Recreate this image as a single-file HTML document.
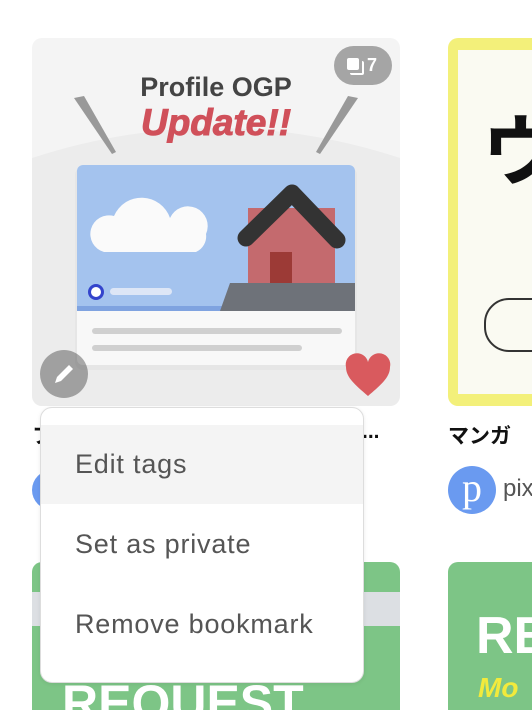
<!DOCTYPE html>
<html><head><meta charset="utf-8"><style>
html,body{margin:0;width:532px;height:710px;overflow:hidden}
body{background:#fff;font-family:"Liberation Sans","Noto Sans CJK JP",sans-serif;position:relative}
.abs{position:absolute}
</style></head><body>
<!-- card 1 -->
<div class="abs" style="left:32px;top:38px;width:368px;height:368px;border-radius:10px;overflow:hidden;background:#f4f4f4">
<svg width="368" height="368" style="position:absolute;left:0;top:0">
<path d="M0 120 Q184 60 368 120 L368 368 L0 368Z" fill="#ececec"/>
<polygon points="42,60 52,58 84,114 80,116" fill="#999"/>
<polygon points="316,58 326,60 288,116 284,114" fill="#999"/>
<text x="184" y="58" text-anchor="middle" font-family="Liberation Sans" font-weight="bold" font-size="27" fill="#444">Profile OGP</text>
<text x="184" y="97" text-anchor="middle" font-family="Liberation Sans" font-weight="bold" font-style="italic" font-size="37" fill="#d0505a" stroke="#d0505a" stroke-width="1">Update!!</text>
<rect x="43" y="129" width="282" height="203" rx="8" fill="#e2e2e2" opacity=".6"/>
<rect x="45" y="127" width="278" height="200" rx="6" fill="#f8f8f8"/>
<path d="M51 127 h266 a6 6 0 0 1 6 6 v140 h-278 v-140 a6 6 0 0 1 6-6z" fill="#a4c3ee"/>
<rect x="45" y="268" width="278" height="5" fill="#7fa3e0"/>
<path d="M72 214 a18 18 0 0 1 10-36 a30 30 0 0 1 56 2 a18 18 0 0 1 36 16 a17 17 0 0 1 -10 18z" fill="#fafafa"/>
<polygon points="188,273 198,245 323,245 323,273" fill="#6e7279"/>
<rect x="216" y="170" width="87" height="75" fill="#c46a6e"/>
<rect x="238" y="214" width="22" height="31" fill="#9c3a36"/>
<path d="M214 200 L260 155 L305 202" stroke="#333" stroke-width="17" fill="none" stroke-linecap="round" stroke-linejoin="round"/>
<circle cx="64" cy="254" r="8" fill="#3344cc"/><circle cx="64" cy="254" r="5" fill="#fff"/>
<rect x="78" y="250" width="62" height="7" rx="3.5" fill="#dde6f6"/>
<rect x="60" y="290" width="250" height="6" rx="3" fill="#d0d0d0"/>
<rect x="60" y="307" width="210" height="6" rx="3" fill="#d0d0d0"/>
</svg>
<div class="abs" style="left:302px;top:8px;width:58px;height:39px;border-radius:20px;background:rgba(0,0,0,.32);color:#fff;font-weight:bold;font-size:18px;line-height:39px">
<span class="abs" style="left:13px;top:12px;width:12px;height:12px;background:#fff;border-radius:2px"></span>
<span class="abs" style="left:16px;top:15px;width:12px;height:12px;border-right:2px solid #fff;border-bottom:2px solid #fff;border-radius:2px"></span>
<span class="abs" style="left:33px;top:0">7</span></div>
<div class="abs" style="left:8px;top:312px;width:48px;height:48px;border-radius:50%;background:rgba(0,0,0,.32)">
<svg width="48" height="48"><path d="M15 33 L17 27 L29 15 L33 19 L21 31Z" fill="#fff"/></svg></div>
<svg class="abs" style="left:312px;top:314px" width="48" height="46" viewBox="0 0 24 23"><path d="M12 22 C5 16 1 12.5 1 7.5 A5.5 5.5 0 0 1 12 5 A5.5 5.5 0 0 1 23 7.5 C23 12.5 19 16 12 22Z" fill="#d95a5e"/></svg>
</div>
<!-- card 2 -->
<div class="abs" style="left:448px;top:38px;width:84px;height:368px;border-radius:10px 0 0 10px;overflow:hidden;background:#f3f07a">
<div class="abs" style="left:10px;top:12px;width:74px;height:344px;background:#fafaf2"></div>
<div class="abs" style="left:34px;top:52px;font-size:78px;font-weight:bold;color:#111;font-family:'Noto Sans CJK JP',sans-serif;white-space:nowrap">ウ</div>
<div class="abs" style="left:36px;top:260px;width:80px;height:50px;border:2px solid #333;border-radius:25px"></div>
</div>
<div class="abs" style="left:448px;top:420px;font-size:21px;font-weight:bold;color:#111;white-space:nowrap">マンガ</div>
<div class="abs" style="left:448px;top:466px;width:48px;height:48px;border-radius:50%;background:#6a9af0;color:#fff;font-size:40px;line-height:44px;text-align:center;font-family:'Liberation Serif',serif">p</div>
<div class="abs" style="left:503px;top:475px;font-size:24px;color:#555">pix</div>
<div class="abs" style="left:32px;top:420px;font-size:21px;font-weight:bold;color:#111">フ</div>
<div class="abs" style="left:362px;top:420px;font-size:21px;font-weight:bold;color:#111">...</div>
<div class="abs" style="left:32px;top:470px;width:40px;height:40px;border-radius:50%;background:#6a9af0"></div>
<!-- bottom cards -->
<div class="abs" style="left:32px;top:562px;width:368px;height:148px;border-radius:10px 10px 0 0;overflow:hidden;background:#7dc586">
<div class="abs" style="left:0;top:30px;width:368px;height:34px;background:#dcdfe3"></div>
<div class="abs" style="left:30px;top:112px;font-size:50px;font-weight:bold;color:#fff">REQUEST</div></div>
<div class="abs" style="left:448px;top:562px;width:84px;height:148px;border-radius:10px 0 0 0;overflow:hidden;background:#7dc586">
<div class="abs" style="left:28px;top:44px;font-size:52px;font-weight:bold;color:#fff">RE</div>
<div class="abs" style="left:30px;top:110px;font-size:28px;font-weight:bold;font-style:italic;color:#f2ea3c">Mo</div></div>
<!-- menu -->
<div class="abs" style="left:40px;top:407px;width:322px;height:274px;border:1px solid #ddd;border-radius:12px;background:#fff;overflow:hidden;box-shadow:0 1px 4px rgba(0,0,0,.08);font-size:27px;color:#555;letter-spacing:0.8px">
<div class="abs" style="left:0;top:17px;width:322px;height:79px;background:#f4f4f4"></div>
<div class="abs" style="left:34px;top:41px">Edit tags</div>
<div class="abs" style="left:34px;top:121px">Set as private</div>
<div class="abs" style="left:34px;top:201px">Remove bookmark</div>
</div>
</body></html>
